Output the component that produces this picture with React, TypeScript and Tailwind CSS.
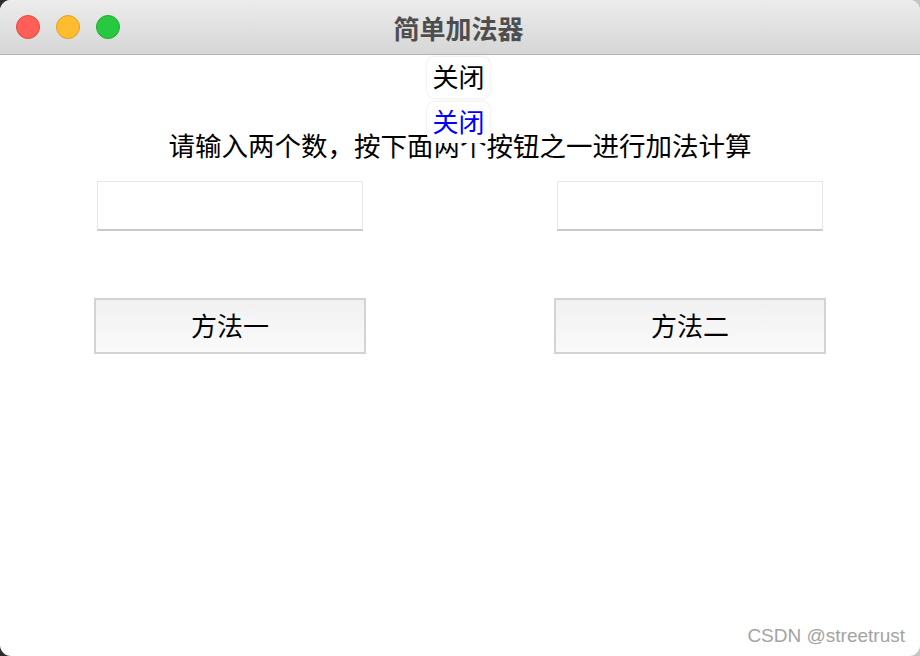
import React from "react";

const cjk = { fontFamily: '"Noto Sans CJK SC", "Noto Sans", sans-serif' };

function TrafficLights() {
  return (
    <div className="flex items-center gap-4 pl-4">
      <span className="block w-6 h-6 rounded-full bg-[#ff5f57] border border-[#e2463f]" />
      <span className="block w-6 h-6 rounded-full bg-[#febc2e] border border-[#dea123]" />
      <span className="block w-6 h-6 rounded-full bg-[#28c840] border border-[#1dad2b]" />
    </div>
  );
}

function Field() {
  return (
    <input
      className="w-[266px] h-[50px] bg-white border border-[#e8e8e8] border-b-2 border-b-[#c9c9c9] outline-none px-2 text-[20px]"
      style={cjk}
    />
  );
}

function MethodButton({ label }: { label: string }) {
  return (
    <button
      className="w-[272px] h-[56px] border-2 border-[#d3d3d3] bg-gradient-to-b from-[#f1f1f1] to-[#fafafa] text-[26px] text-black leading-none pb-[2px]"
      style={cjk}
    >
      {label}
    </button>
  );
}

export default function App() {
  return (
    <div className="w-[920px] h-[656px] bg-gradient-to-r from-[#2c2c2c] via-[#8d8d8d] to-[#c6c6c6]">
      <div className="relative w-full h-full bg-white rounded-[11px] overflow-hidden flex flex-col" style={cjk}>
        {/* Title bar */}
        <div className="relative h-[55px] shrink-0 flex items-center bg-gradient-to-b from-[#ececec] to-[#d6d6d6] border-b border-[#b3b3b3]">
          <TrafficLights />
          <div className="absolute inset-0 flex items-center justify-center pr-[3px] text-[26px] font-bold text-[#4e4e4e]">
            简单加法器
          </div>
        </div>

        {/* Content */}
        <div className="flex flex-col items-center">
          <p className="mt-[74px] h-[32px] leading-[32px] text-[26.5px] text-black">
            请输入两个数，按下面两个按钮之一进行加法计算
          </p>
          <div className="grid grid-cols-2 w-full mt-[20px]">
            <div className="flex justify-center">
              <Field />
            </div>
            <div className="flex justify-center">
              <Field />
            </div>
          </div>
          <div className="grid grid-cols-2 w-full mt-[67px]">
            <div className="flex justify-center">
              <MethodButton label="方法一" />
            </div>
            <div className="flex justify-center">
              <MethodButton label="方法二" />
            </div>
          </div>
        </div>

        {/* Close buttons laid over the label */}
        <div className="absolute top-[57px] left-[427px] flex flex-col gap-[4px]">
          <button className="w-[63px] h-[41px] rounded-[8px] bg-white shadow-[0_0_3px_rgba(0,0,0,0.12)] text-[26px] leading-none text-black pb-[4px]">
            关闭
          </button>
          <button className="w-[63px] h-[41px] rounded-[8px] bg-white shadow-[0_0_3px_rgba(0,0,0,0.12)] text-[26px] leading-none text-[#0000ff] pb-[4px]">
            关闭
          </button>
        </div>

        {/* Watermark */}
        <div
          className="absolute right-[15px] bottom-[6px] text-[19px] text-[#a3a3a3] [text-shadow:0_0_1px_#ffffff]"
          style={{ fontFamily: '"Liberation Sans", Arial, sans-serif' }}
        >
          CSDN @streetrust
        </div>
      </div>
    </div>
  );
}
